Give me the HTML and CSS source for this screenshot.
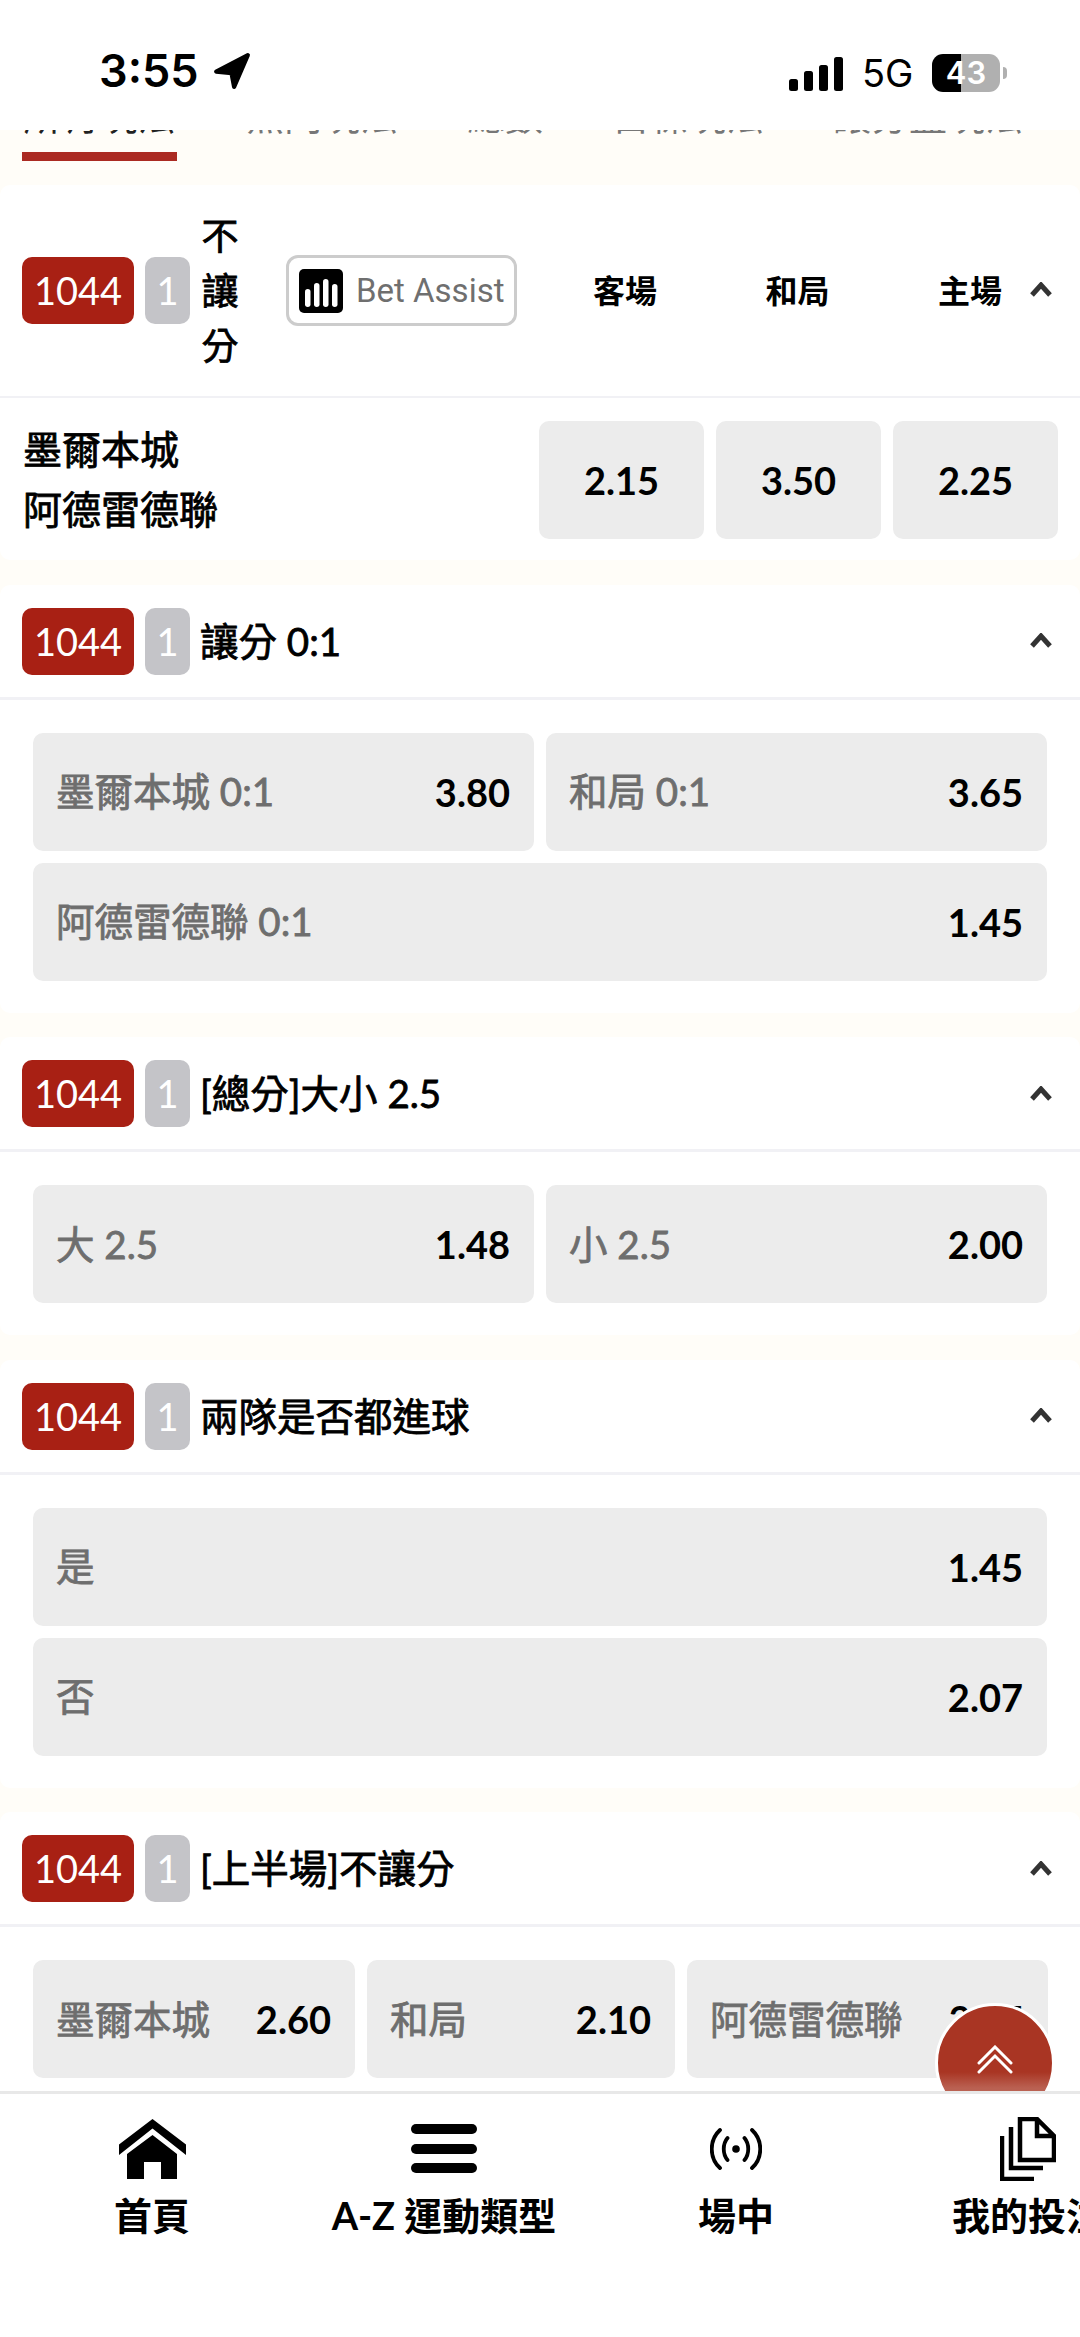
FILE: index.html
```html
<!DOCTYPE html>
<html lang="zh-Hant">
<head>
<meta charset="utf-8">
<title>墨爾本城 v 阿德雷德聯</title>
<link rel="stylesheet" href="styles.css">
</head>
<body>
<div class="phone">
  <header class="status">
    <span class="time">3:55</span>
    <svg class="loc" viewBox="0 0 36 36"><path d="M33 3 3 18.500 17.500 20 20 33Z"/></svg>
    <div class="status-right">
      <svg class="signal" viewBox="0 0 54 34"><rect x="0" y="22" width="9" height="12" rx="2.500"/><rect x="15" y="14" width="9" height="20" rx="2.500"/><rect x="30" y="8" width="9" height="26" rx="2.500"/><rect x="45" y="0" width="9" height="34" rx="2.500"/></svg>
      <span class="net">5G</span>
      <span class="battery">43</span>
      <span class="nub"></span>
    </div>
  </header>

  <nav class="tabs">
    <div class="tab-strip">
      <span class="tab tab-active">所有玩法</span>
      <span class="tab">熱門玩法</span>
      <span class="tab">總數</span>
      <span class="tab">目標玩法</span>
      <span class="tab">讓分盤玩法</span>
    </div>
  </nav>

  <main class="content">
    <section class="card">
      <div class="head head-tall">
        <span class="code">1044</span>
        <span class="num">1</span>
        <span class="title title-narrow">不讓分</span>
        <span class="assist">
          <svg class="assist-icon" viewBox="0 0 44 44"><rect width="44" height="44" rx="5"/><g fill="#fff"><rect x="6" y="20" width="5.500" height="18" rx="2.750"/><rect x="15" y="14" width="5.500" height="24" rx="2.750"/><rect x="24" y="10" width="5.500" height="28" rx="2.750"/><rect x="33" y="15" width="5.500" height="23" rx="2.750"/></g></svg>
          Bet Assist
        </span>
        <div class="cols"><span>客場</span><span>和局</span><span>主場</span></div>
        <svg class="chev" viewBox="0 0 24 16"><path d="M3 13 12 3l9 10"/></svg>
      </div>
      <div class="match">
        <div class="teams">墨爾本城<br>阿德雷德聯</div>
        <div class="match-odds">
          <span class="odd">2.15</span><span class="odd">3.50</span><span class="odd">2.25</span>
        </div>
      </div>
    </section>

    <section class="card">
      <div class="head">
        <span class="code">1044</span><span class="num">1</span><span class="title">讓分 0:1</span>
        <svg class="chev" viewBox="0 0 24 16"><path d="M3 13 12 3l9 10"/></svg>
      </div>
      <div class="grid two">
        <div class="pick"><span class="lab">墨爾本城 0:1</span><span class="val">3.80</span></div>
        <div class="pick"><span class="lab">和局 0:1</span><span class="val">3.65</span></div>
        <div class="pick wide"><span class="lab">阿德雷德聯 0:1</span><span class="val">1.45</span></div>
      </div>
    </section>

    <section class="card">
      <div class="head">
        <span class="code">1044</span><span class="num">1</span><span class="title">[總分]大小 2.5</span>
        <svg class="chev" viewBox="0 0 24 16"><path d="M3 13 12 3l9 10"/></svg>
      </div>
      <div class="grid two">
        <div class="pick"><span class="lab">大 2.5</span><span class="val">1.48</span></div>
        <div class="pick"><span class="lab">小 2.5</span><span class="val">2.00</span></div>
      </div>
    </section>

    <section class="card">
      <div class="head">
        <span class="code">1044</span><span class="num">1</span><span class="title">兩隊是否都進球</span>
        <svg class="chev" viewBox="0 0 24 16"><path d="M3 13 12 3l9 10"/></svg>
      </div>
      <div class="grid two">
        <div class="pick wide"><span class="lab">是</span><span class="val">1.45</span></div>
        <div class="pick wide"><span class="lab">否</span><span class="val">2.07</span></div>
      </div>
    </section>

    <section class="card">
      <div class="head">
        <span class="code">1044</span><span class="num">1</span><span class="title">[上半場]不讓分</span>
        <svg class="chev" viewBox="0 0 24 16"><path d="M3 13 12 3l9 10"/></svg>
      </div>
      <div class="grid three">
        <div class="pick"><span class="lab">墨爾本城</span><span class="val">2.60</span></div>
        <div class="pick"><span class="lab">和局</span><span class="val">2.10</span></div>
        <div class="pick"><span class="lab">阿德雷德聯</span><span class="val">2.85</span></div>
      </div>
    </section>

    <button class="fab" aria-label="top">
      <svg viewBox="0 0 36 30"><path d="M2 18 18 2l16 16M2 27 18 11l16 16"/></svg>
    </button>
  </main>

  <footer class="tabbar">
    <div class="nav-item">
      <span class="nav-icon"><svg class="i-home" viewBox="0 0 67 60"><path class="solid" d="M33.500 0 67 25.500V36L33.500 9.500 0 36V25.500Z"/><path class="solid" d="M33.500 16 58 35V60H42V43H25V60H8V35Z"/></svg></span>
      <span class="nav-label">首頁</span>
    </div>
    <div class="nav-item">
      <span class="nav-icon"><svg class="i-menu" viewBox="0 0 66 50"><rect y="0" width="66" height="10" rx="5"/><rect y="20" width="66" height="10" rx="5"/><rect y="39" width="66" height="10" rx="5"/></svg></span>
      <span class="nav-label">A-Z 運動類型</span>
    </div>
    <div class="nav-item">
      <span class="nav-icon"><svg class="i-live" viewBox="0 0 52 42"><circle cx="26" cy="21" r="3.800" fill="#000" stroke="none"/><path d="M10 2C-1 12-1 30 10 40M42 2c11 10 11 28 0 38M17.500 10c-5 6-5 16 0 22M34.500 10c5 6 5 16 0 22"/></svg></span>
      <span class="nav-label">場中</span>
    </div>
    <div class="nav-item">
      <span class="nav-icon"><svg class="i-copy" viewBox="0 0 56 64"><path d="M20 2H37L54 19V43H20ZM37 2V19H54M11 10V51H43M2 19V62H34"/></svg></span>
      <span class="nav-label">我的投注</span>
    </div>
  </footer>
</div>
</body>
</html>
```
FILE: styles.css
```css
* { box-sizing: border-box; }
html, body { margin: 0; padding: 0; background: #fff; }
body { font-family: Lato, "Noto Sans CJK TC", sans-serif; color: #000; }

.phone { width: 1080px; height: 2337px; display: flex; flex-direction: column; overflow: hidden; background: #fff; }

/* status bar */
.status { height: 130px; flex: none; display: flex; align-items: flex-start; padding: 49px 73px 0 99px; background: #fff; position: relative; z-index: 2; }
.time { font: 600 45px/44px Inter, sans-serif; }
.loc { width: 38px; height: 38px; margin: 3px 0 0 14px; stroke: #000; stroke-width: 4; stroke-linejoin: round; }
.status-right { margin-left: auto; display: flex; align-items: center; height: 44px; margin-top: 2px; }
.signal { width: 54px; height: 34px; margin-top: 2px; }
.net { font: 400 38px/44px Inter, sans-serif; margin-left: 19px; width: 51px; }
.battery { width: 68px; height: 38px; margin-left: 19px; border-radius: 11px; background: linear-gradient(90deg, #000 0 29px, #b0b0b0 29px); color: #fff; font: 600 31px/38px Inter, sans-serif; text-align: center; }
.nub { width: 4px; height: 12px; margin-left: 3px; background: #b0b0b0; border-radius: 0 4px 4px 0; }

/* tabs */
.tabs { height: 55px; flex: none; background: #fffdf8; overflow: hidden; }
.tab-strip { display: flex; gap: 69px; padding-left: 22px; margin-top: -35px; font-size: 38px; line-height: 40px; color: #777; white-space: nowrap; }
.tab { flex: none; }
.tab-active { width: 155px; color: #222; text-align: center; }
.tab-active::after { content: ""; display: block; height: 9px; margin-top: 17px; background: #ab2a22; }

/* content */
.content { flex: 1; min-height: 0; background: #fffdf8; overflow: hidden; position: relative; display: flex; flex-direction: column; gap: 24.5px; }
.card { background: #fff; border-radius: 10px; flex: none; }
.head { height: 115px; border-bottom: 3px solid #f1f1f5; display: flex; align-items: center; padding: 1px 27px 0 22px; }
.head-tall { height: 213px; border-bottom-width: 2px; padding-top: 0; }
.code { width: 112px; height: 67px; border-radius: 10px; background: #a82014; color: #fff; font-size: 38px; line-height: 67px; text-align: center; flex: none; }
.num { width: 45px; height: 67px; border-radius: 10px; background: #c4c4c8; color: #fff; font-size: 38px; line-height: 67px; text-align: center; margin-left: 11px; flex: none; }
.title { font-size: 38.5px; font-weight: 400; line-height: 55px; margin-left: 10px; white-space: nowrap; -webkit-text-stroke: 0.8px #000; }
.title-narrow { width: 40px; white-space: normal; text-align: center; font-size: 37px; }
.chev { width: 24px; height: 16px; margin-left: auto; fill: none; stroke: #333; stroke-width: 5; flex: none; }
.cols { margin-left: auto; margin-bottom: 4px; display: flex; gap: 108.500px; font-size: 32px; font-weight: 700; }
.cols span { width: 64px; white-space: nowrap; }
.head-tall .chev { margin-left: 27px; margin-bottom: 2px; }

.assist { margin-left: 46px; width: 231px; height: 71px; border: 3px solid #ccc; border-radius: 12px; display: flex; align-items: center; padding-left: 10px; gap: 13px; font: 400 33px/1 Roboto, sans-serif; color: #6f6f6f; white-space: nowrap; flex: none; }
.assist-icon { width: 44px; height: 44px; flex: none; }

.match { height: 162px; display: flex; align-items: flex-start; justify-content: space-between; padding: 23px 22px 0 23px; }
.teams { font-size: 39px; font-weight: 400; line-height: 60px; margin-top: -2px; white-space: nowrap; -webkit-text-stroke: 0.8px #000; }
.match-odds { display: grid; grid-template-columns: repeat(3, 165px); gap: 12px; }
.odd { height: 118px; background: #ececec; border-radius: 10px; display: flex; align-items: center; justify-content: center; font-size: 38px; font-weight: 700; }

.grid { display: grid; gap: 12px; padding: 33px 33px 32px; }
.two { grid-template-columns: 1fr 1fr; }
.three { grid-template-columns: 322px 308px 361px; }
.wide { grid-column: 1 / -1; }
.pick { height: 118px; background: #ececec; border-radius: 10px; display: flex; align-items: center; justify-content: space-between; padding: 0 24px; white-space: nowrap; overflow: hidden; }
.lab { font-size: 38.5px; font-weight: 400; color: #6e6e6e; margin-bottom: 5px; margin-left: -1px; -webkit-text-stroke: 0.8px #6e6e6e; }
.val { font-size: 38px; font-weight: 700; }

.fab { position: absolute; right: 25px; bottom: -32px; width: 120px; height: 120px; padding: 0; border: 3px solid #fff; border-radius: 50%; background: linear-gradient(180deg, #a93523 0 58%, #ba6152 72%); display: flex; justify-content: center; padding-top: 39px; }
.fab svg { width: 36px; height: 30px; fill: none; stroke: #fff; stroke-width: 3; stroke-linecap: round; }

/* bottom nav */
.tabbar { height: 246px; flex: none; border-top: 3px solid #e8e8e8; background: #fff; display: grid; grid-template-columns: repeat(4, 292px); padding: 22px 0 0 6px; overflow: hidden; position: relative; z-index: 1; }
.nav-item { display: flex; flex-direction: column; align-items: center; white-space: nowrap; }
.nav-icon { height: 65px; display: flex; align-items: center; justify-content: center; }
.nav-label { font-size: 38px; font-weight: 700; line-height: 44px; margin-top: 12px; }
.i-home { width: 67px; height: 60px; }
.i-menu { width: 66px; height: 50px; }
.i-live { width: 52px; height: 42px; fill: none; stroke: #000; stroke-width: 3.800; stroke-linecap: round; }
.i-copy { width: 56px; height: 64px; fill: none; stroke: #000; stroke-width: 4.500; }
```
